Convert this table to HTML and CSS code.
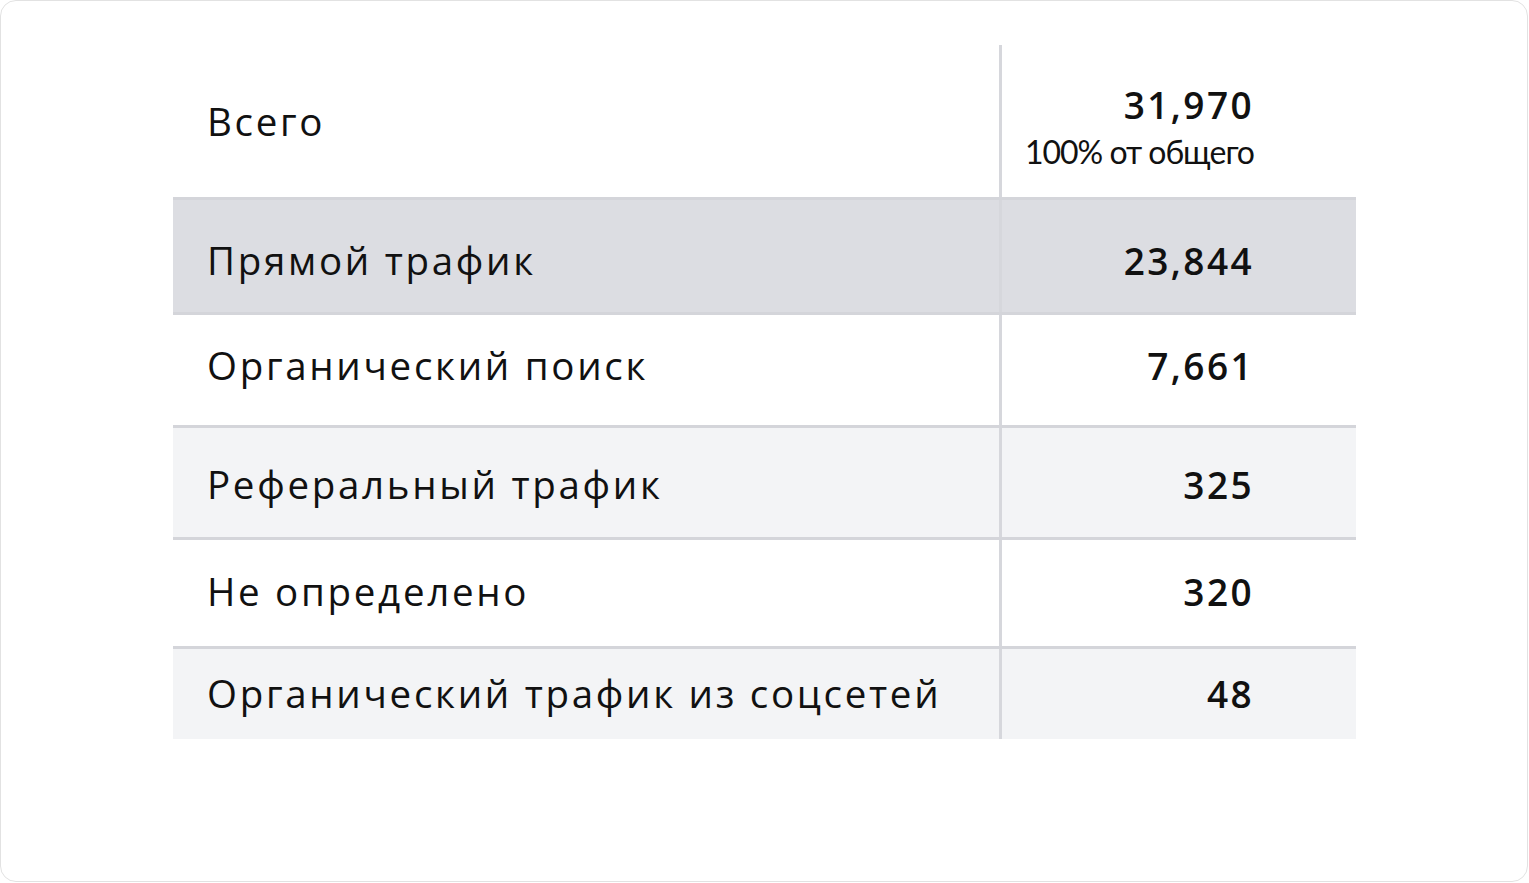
FILE: index.html
```html
<!DOCTYPE html>
<html lang="ru">
<head>
<meta charset="utf-8">
<title>Трафик</title>
<link rel="stylesheet" href="styles.css">
</head>
<body>
<div class="card">
  <div class="table">
    <div class="row row-head">
      <div class="cell label">Всего</div>
      <div class="cell value">
        <div class="num">31,970</div>
        <div class="sub">100% от общего</div>
      </div>
    </div>
    <div class="row row-1 bg-dark">
      <div class="cell label">Прямой трафик</div>
      <div class="cell value"><div class="num">23,844</div></div>
    </div>
    <div class="row row-2">
      <div class="cell label">Органический поиск</div>
      <div class="cell value"><div class="num">7,661</div></div>
    </div>
    <div class="row row-3 bg-light">
      <div class="cell label">Реферальный трафик</div>
      <div class="cell value"><div class="num">325</div></div>
    </div>
    <div class="row row-4">
      <div class="cell label">Не определено</div>
      <div class="cell value"><div class="num">320</div></div>
    </div>
    <div class="row row-5 bg-light">
      <div class="cell label">Органический трафик из соцсетей</div>
      <div class="cell value"><div class="num">48</div></div>
    </div>
  </div>
</div>
</body>
</html>
```
FILE: styles.css
```css
html, body {
  margin: 0;
  padding: 0;
  background: #ffffff;
}
body {
  font-family: "Open Sans", "Noto Sans", sans-serif;
  color: #111111;
}
.card {
  box-sizing: border-box;
  width: 1528px;
  height: 882px;
  border: 1px solid #e2e2e2;
  border-radius: 16px;
  background: #ffffff;
  padding: 44px 0 0 172px;
}
.table {
  width: 1183px;
  display: flex;
  flex-direction: column;
}
.row {
  display: flex;
  align-items: stretch;
  border-top: 3px solid #d4d5da;
}
.row-head {
  border-top: none;
  height: 152px;
}
.row-1 { height: 112px; }
.row-2 { height: 110px; }
.row-3 { height: 109px; }
.row-4 { height: 106px; }
.row-5 { height: 90px; }
.bg-dark { background: #dcdde2; }
.bg-light { background: #f3f4f6; }
.cell {
  box-sizing: border-box;
  display: flex;
  flex-direction: column;
  justify-content: center;
  padding-bottom: 4px;
}
.label {
  width: 829px;
  padding-left: 34px;
  border-right: 3px solid #d6d7dc;
  font-size: 38.5px;
  letter-spacing: 2.7px;
  line-height: 1;
}
.row-1 .cell { padding-top: 8px; padding-bottom: 0; }
.row-2 .cell { padding-bottom: 10px; }
.row-3 .cell { padding-top: 4px; padding-bottom: 0; }
.row-4 .cell { padding-bottom: 4px; }
.row-5 .cell { padding-top: 2px; padding-bottom: 4px; }
.row-head .label { padding-bottom: 0; }
.value {
  flex: 1;
  align-items: flex-end;
  padding-right: 102px;
}
.row-head .value { padding-top: 12px; padding-bottom: 0; }
.num {
  font-weight: 600;
  font-size: 37px;
  letter-spacing: 2.4px;
  line-height: 1;
}
.sub {
  margin-top: 13px;
  font-family: "Lato", "Open Sans", sans-serif;
  font-size: 32px;
  letter-spacing: -1px;
  line-height: 1;
}
```
